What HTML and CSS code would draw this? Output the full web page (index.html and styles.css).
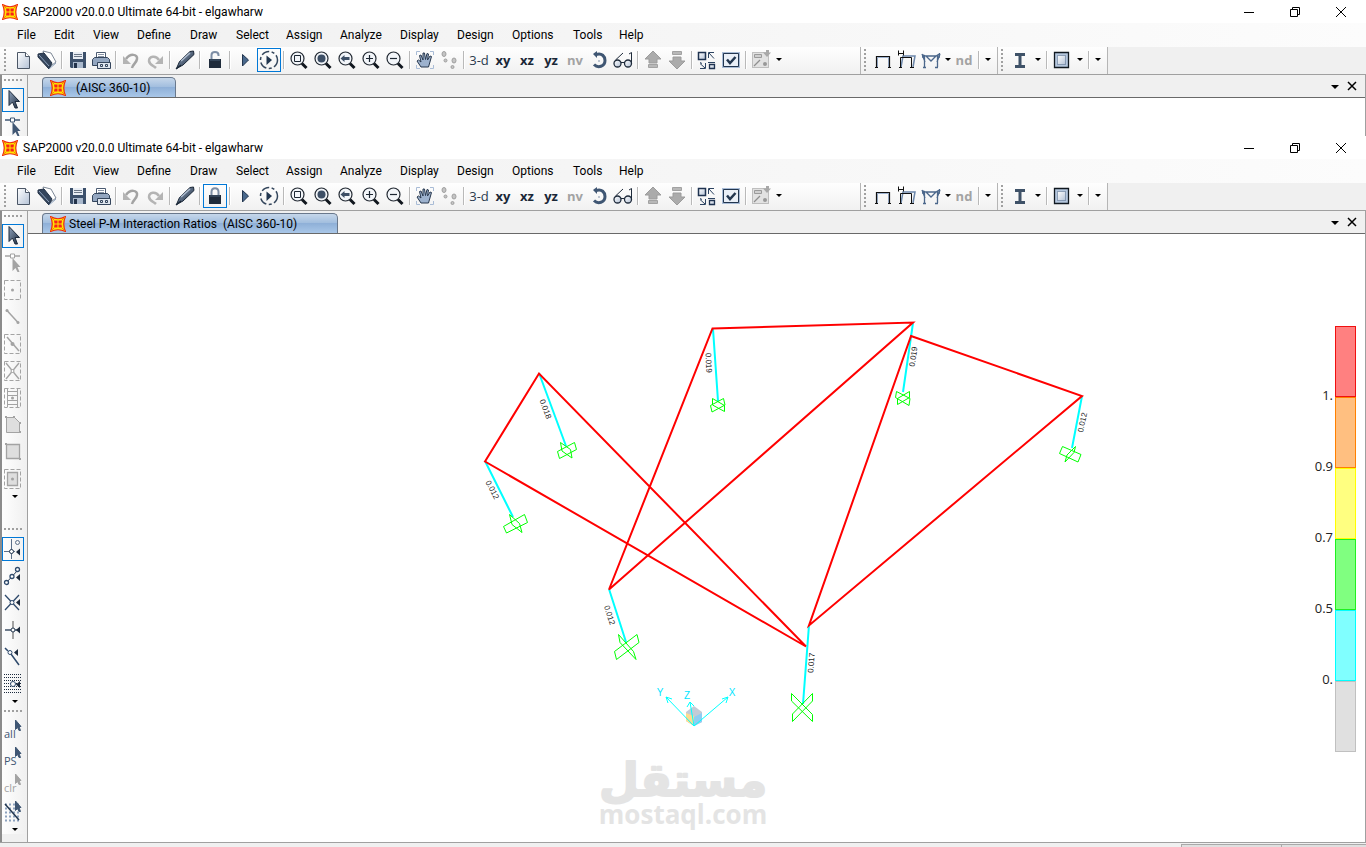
FILE: index.html
```html
<!DOCTYPE html>
<html lang="en">
<head>
  <meta charset="utf-8">
  <title>SAP2000 v20.0.0 Ultimate 64-bit - elgawharw</title>
  <meta name="viewport" content="width=device-width, initial-scale=1.0">
  <link rel="stylesheet" href="styles.css">
</head>
<body>

  <!-- icon set -->
  <svg class="sprite" aria-hidden="true">
    <defs>
      <linearGradient id="steel" x1="0" y1="0" x2="1" y2="1">
        <stop offset="0" stop-color="#8fa3bd"/><stop offset="1" stop-color="#1d2a3c"/>
      </linearGradient>
      <linearGradient id="pale" x1="0" y1="0" x2="1" y2="1">
        <stop offset="0" stop-color="#ffffff"/><stop offset="1" stop-color="#b4c2d6"/>
      </linearGradient>
    </defs>

    <symbol id="logo" viewBox="0 0 16 16">
      <path d="M.5.500Q8 5 15.500.500 12 8 15.500 15.500 8 12 .500 15.500 4 8 .500.500z" fill="#ffe600" stroke="#ee2a10" stroke-width="1.200"/>
      <path d="M4 4.500h3.500v3H4.500zM8.500 4.500H12l-.5 3h-3zM4.500 8.500h3v3H4zM8.500 8.500h3l.5 3H8.500z" fill="#f8201c"/>
      <path d="M1 1l3 3M15 1l-3 3M1 15l3-3M15 15l-3-3" stroke="#f58a00"/>
    </symbol>

    <symbol id="new" viewBox="0 0 24 24">
      <path d="M6.500 4.500h8l4 4v12h-12z" fill="url(#pale)" stroke="#4b5666"/>
      <path d="M14.500 4.500v4h4" fill="#fff" stroke="#4b5666"/>
    </symbol>
    <symbol id="open" viewBox="0 0 24 24">
      <path d="M8 3l8 2 5 9-8 6z" fill="#fff" stroke="#7d8896"/>
      <path d="M3 6l6-1 8 10-3 6L3 9z" fill="#34455c" stroke="#223146"/>
      <path d="M4 7l10 11" stroke="#8fa3bd"/>
      <path d="M14 21l7-6" stroke="#8fa3bd"/>
    </symbol>
    <symbol id="save" viewBox="0 0 24 24">
      <path d="M5 4h16v16H6l-1-1z" fill="#3c506b"/>
      <path d="M8 4h10v7H8z" fill="#e8edf4"/>
      <path d="M9 6.500h8M9 8.500h8" stroke="#6a7686"/>
      <path d="M8 14h10v6H8z" fill="#aab9cd"/>
      <path d="M9 15h3v5H9z" fill="#22324a"/>
    </symbol>
    <symbol id="print" viewBox="0 0 24 24">
      <path d="M7.500 11V4.500h9V11" fill="#fff" stroke="#4b5b72"/>
      <path d="M9 6.500h6M9 8.500h6" stroke="#8793a5"/>
      <path d="M3.500 11.500l2-2h13l2 2v6h-17z" fill="#93a6c0" stroke="#34455c"/>
      <path d="M8.500 14.500h13v6h-13z" fill="#dfe6ef" stroke="#34455c"/>
      <path d="M11.500 16.500h2v2h-2zM16.500 16.500h2v2h-2z" fill="none" stroke="#34455c"/>
    </symbol>
    <symbol id="undo" viewBox="0 0 24 24">
      <path d="M7 11c4-6 12-5 11 0-.5 4-4 5-5 9" fill="none" stroke="#a3a3a3" stroke-width="2.500"/>
      <path d="M4 8v8h8z" fill="#b4b4b4"/>
    </symbol>
    <symbol id="redo" viewBox="0 0 24 24">
      <path d="M16 12c-3-5-10-4-10 1 .5 4 5 5 7 7" fill="none" stroke="#b4b4b4" stroke-width="2.500"/>
      <path d="M20 8v8h-8z" fill="#b4b4b4"/>
    </symbol>
    <symbol id="pen" viewBox="0 0 24 24">
      <path d="M3.500 20.500l3-7L17 3.500l3.500-.5.500 3.500L10 17z" fill="url(#steel)" stroke="#1b2838"/>
      <path d="M8 13L17 5" stroke="#aebccf" stroke-width="1.500"/>
      <path d="M3 21l5-4" stroke="#1b2838" stroke-width="1.500"/>
    </symbol>
    <symbol id="unlocked" viewBox="0 0 24 24">
      <path d="M8.500 12V7c0-4 7-4 7 0v1" fill="none" stroke="#7d8ea5" stroke-width="2"/>
      <path d="M6 11h12v9H6z" fill="#1f2b3b"/>
      <path d="M7 12h10" stroke="#4b6078"/>
    </symbol>
    <symbol id="locked" viewBox="0 0 24 24">
      <path d="M8.500 12V8c0-5 7-5 7 0v4" fill="none" stroke="#7d8ea5" stroke-width="2"/>
      <path d="M6 11h12v9H6z" fill="#1f2b3b"/>
      <path d="M7 12h10" stroke="#4b6078"/>
    </symbol>
    <symbol id="run" viewBox="0 0 24 24">
      <path d="M9.500 6.500l6 5.500-6 6z" fill="#49688c" stroke="#22364f"/>
    </symbol>
    <symbol id="runall" viewBox="0 0 24 24">
      <circle cx="12" cy="12" r="8.500" fill="none" stroke="#34465c" stroke-width="1.500" stroke-dasharray="8 2.500 3 2.500"/>
      <path d="M9.500 7.500l5.500 4.500-5.500 5z" fill="#22364f"/>
    </symbol>
    <symbol id="lens" viewBox="0 0 24 24">
      <circle cx="10.500" cy="10.500" r="6.500" fill="#f2f5f9" stroke="#232a33" stroke-width="1.200"/>
      <path d="M15 15.500l4.500 4.500" stroke="#10161e" stroke-width="3"/>
    </symbol>
    <symbol id="zoombox" viewBox="0 0 24 24">
      <use href="#lens"/><path d="M7.500 7.500h6v6h-6z" fill="none" stroke="#1c2632"/>
    </symbol>
    <symbol id="zoomfull" viewBox="0 0 24 24">
      <use href="#lens"/><circle cx="10.500" cy="10.500" r="4" fill="#3d4f66"/>
    </symbol>
    <symbol id="zoomprev" viewBox="0 0 24 24">
      <use href="#lens"/><path d="M5.500 10.500l4-3.500v2h5v3h-5v2z" fill="#3d4f66"/>
    </symbol>
    <symbol id="zoomin" viewBox="0 0 24 24">
      <use href="#lens"/><path d="M7 10.500h7M10.500 7v7" stroke="#1c2632" stroke-width="1.200"/>
    </symbol>
    <symbol id="zoomout" viewBox="0 0 24 24">
      <use href="#lens"/><path d="M7 10.500h7" stroke="#1c2632" stroke-width="1.200"/>
    </symbol>
    <symbol id="hand" viewBox="0 0 24 24">
      <path d="M3.500 7V3.500H7M17 3.500h3.500V7M20.500 17v3.500H17M7 20.500H3.500V17" fill="none" stroke="#a9bcd6"/>
      <path d="M8 19l-4-6 1.500-1L8 14 6.500 7.500 8 7l2 5V5h1.500l1 6.500L14 5.500l1.500.5-1 6 2.500-4 1.500.5-3 10.500z" fill="#9db2ce" stroke="#27374d"/>
    </symbol>
    <symbol id="feet" viewBox="0 0 24 24">
      <g fill="#c4c4c4" stroke="#9f9f9f">
        <ellipse cx="7" cy="6" rx="2" ry="2.500"/><circle cx="8.500" cy="12.500" r="1.500"/>
        <ellipse cx="17" cy="12.500" rx="2" ry="2.500"/><circle cx="15.500" cy="19" r="1.500"/>
      </g>
    </symbol>
    <symbol id="rotate" viewBox="0 0 24 24">
      <path d="M9 6.500c6-2 9 2 9 6 0 6-7 8-11 4" fill="none" stroke="#3f5673" stroke-width="3"/>
      <path d="M10 3v7L6 6z" fill="#3f5673"/><path d="M11 13h2" stroke="#8394ab"/>
    </symbol>
    <symbol id="glasses" viewBox="0 0 24 24">
      <g fill="url(#pale)" stroke="#1f2b3b" stroke-width="1.300"><circle cx="6.500" cy="15.500" r="3.500"/><circle cx="17" cy="15.500" r="3.500"/></g>
      <path d="M10 14.500h3.500M4.500 12L12 5M20.500 15V4.500L18 6" fill="none" stroke="#1f2b3b"/>
    </symbol>
    <symbol id="up" viewBox="0 0 24 24">
      <path d="M12 3l8 8h-4v4H8v-4H4z" fill="#ababab" stroke="#9c9c9c"/><path d="M7.500 16.500h9v3h-9z" fill="#b8b8b8" stroke="#a2a2a2"/>
    </symbol>
    <symbol id="down" viewBox="0 0 24 24">
      <path d="M12 21l8-8h-4V9H8v4H4z" fill="#ababab" stroke="#9c9c9c"/><path d="M7.500 3.500h9v3h-9z" fill="#b8b8b8" stroke="#a2a2a2"/>
    </symbol>
    <symbol id="shrink" viewBox="0 0 24 24">
      <path d="M3.500 4.500h7v7h-7z" fill="url(#pale)" stroke="#1f3350" stroke-width="1.500"/>
      <path d="M14.500 16.500h5v4h-5z" fill="url(#pale)" stroke="#1f3350" stroke-width="1.300"/>
      <path d="M13.500 10V4.500H19M14 5l5 5.500M10.500 15v5.500H5M10 20l-5-4.500M13 14.500h7M5 14.500l2 1" fill="none" stroke="#2c4361"/>
    </symbol>
    <symbol id="check" viewBox="0 0 24 24">
      <path d="M4 5h16v14H4z" fill="#e9eff7" stroke="#a9bcd6" stroke-width="2"/>
      <path d="M4.500 5.500h15v13h-15z" fill="none" stroke="#22364f"/>
      <path d="M8 11.500l3 3.500 5.500-6" fill="none" stroke="#22364f" stroke-width="2.500"/>
    </symbol>
    <symbol id="pointobj" viewBox="0 0 24 24">
      <path d="M3.500 4.500h16v15h-16z" fill="#e2e2e2" stroke="#8f8f8f" stroke-dasharray="1 1"/>
      <path d="M5.500 6.500h7v3h-7z" fill="#d0d0d0" stroke="#9a9a9a"/><path d="M14 4.500h3V2h3v2.500h2L18 9z" fill="#a8a8a8"/><path d="M5 18l6-6" stroke="#8f8f8f" stroke-width="1.300"/><circle cx="16" cy="16" r="2" fill="#989898"/>
    </symbol>
    <symbol id="frame" viewBox="0 0 24 24">
      <path d="M6.500 20V9.500h11V20" fill="none" stroke="#9db2d0"/>
      <path d="M5.500 19.500v-11h13v11M4 19.500h3M17 19.500h3" fill="none" stroke="#111" stroke-width="1.200"/>
    </symbol>
    <symbol id="deform" viewBox="0 0 24 24">
      <path d="M6 19L8 8h12l-2 11" fill="none" stroke="#6c87aa" stroke-width="1.500"/>
      <path d="M5.500 19.500v-10h11v10M4 19.500h3M15 19.500h4M3.500 2.500v5M8.500 2.500v5M3.500 5.500h5" fill="none" stroke="#111"/>
    </symbol>
    <symbol id="forces" viewBox="0 0 24 24">
      <path d="M5.500 19V8L3 6.500 7 8h10l4-2.500-2.500 2v11.500M3 9h2.500M18 9h3M7 8l5 5 5-5M6 14L3 6M18 14l3-8M4 19.500h3M16 19.500h3" fill="none" stroke="#4b678b" stroke-width="1.300"/>
    </symbol>
    <symbol id="ibeam" viewBox="0 0 24 24">
      <path d="M7 5h10v3h-3.500v9H17v3H7v-3h3.500V8H7z" fill="#3f5268"/>
    </symbol>
    <symbol id="section" viewBox="0 0 24 24">
      <path d="M4.500 4.500h14v15h-14z" fill="#b5c7de" stroke="#101820" stroke-width="1.300"/>
      <path d="M7.500 7.500h8v9h-8z" fill="url(#pale)" stroke="#4d6484" stroke-dasharray="1 1"/>
    </symbol>

    <!-- side bar icons -->
    <symbol id="pick" viewBox="0 0 22 24">
      <path d="M7 2.500v15l3.500-3.500 2.500 6h2.500L13 13.500h4.500z" fill="url(#steel)" stroke="#1d2a3c"/>
    </symbol>
    <symbol id="reshape" viewBox="0 0 22 24">
      <path d="M3 5h15" stroke="currentColor" stroke-width="1.500"/><path d="M8.500 3h4v4h-4z" fill="#fff" stroke="currentColor"/>
      <path d="M10.500 7v13l3-3 2 4h2l-2-5h3z" fill="currentColor"/>
    </symbol>
    <symbol id="box" viewBox="0 0 22 24">
      <path d="M2.500 2.500h16v19h-16z" fill="none" stroke="currentColor" stroke-dasharray="4 2"/>
    </symbol>
    <symbol id="joint" viewBox="0 0 22 24">
      <use href="#box"/><circle cx="10.500" cy="12" r="1.500" fill="currentColor"/>
    </symbol>
    <symbol id="member" viewBox="0 0 22 24">
      <path d="M5 5.500l11 12" stroke="currentColor" stroke-width="1.500"/><circle cx="5" cy="5.500" r="1.500" fill="currentColor"/><circle cx="16" cy="17.500" r="1.500" fill="currentColor"/>
    </symbol>
    <symbol id="quickmember" viewBox="0 0 22 24">
      <use href="#box"/><path d="M5 5l12 14" stroke="currentColor" stroke-width="1.500"/><circle cx="10.500" cy="12" r="2" fill="currentColor"/>
    </symbol>
    <symbol id="brace" viewBox="0 0 22 24">
      <use href="#box"/><path d="M4 4l13 16M17 4L4 20" stroke="currentColor" stroke-width="1.300"/><circle cx="10.500" cy="12" r="1.500" fill="#fff" stroke="currentColor"/>
    </symbol>
    <symbol id="beams" viewBox="0 0 22 24">
      <use href="#box"/><path d="M5.500 3v18M15.500 3v18M5 5.500h11M5 9.500h11M5 14.500h11M5 18.500h11" stroke="currentColor"/><circle cx="10.500" cy="12" r="1.500" fill="currentColor"/>
    </symbol>
    <symbol id="poly" viewBox="0 0 22 24">
      <path d="M4.500 4.500h8l5 5v10h-13z" fill="#dedede" stroke="currentColor"/><path d="M3 3h2v2H3zM11 3h2v2h-2zM17 9h2v2h-2zM17 18h2v2h-2z" fill="currentColor"/>
    </symbol>
    <symbol id="rect" viewBox="0 0 22 24">
      <path d="M4.500 4.500h13v14h-13z" fill="#dedede" stroke="currentColor" stroke-width="1.300"/><path d="M3 3h2v2H3zM17 18h2v2h-2z" fill="currentColor"/>
    </symbol>
    <symbol id="area" viewBox="0 0 22 24">
      <use href="#box"/><path d="M5.500 5.500h10v13h-10z" fill="#dedede" stroke="currentColor" stroke-width="1.300"/><circle cx="10.500" cy="12" r="1.500" fill="currentColor"/>
    </symbol>
    <symbol id="snapjoint" viewBox="0 0 22 24">
      <path d="M2 14.500h11M9.500 2v20" stroke="#5d7089"/><circle cx="9.500" cy="14.500" r="2" fill="#fff" stroke="#22364f"/><circle cx="15.500" cy="5.500" r="2" fill="none" stroke="#5d7089"/><path d="M18 11.500v7l-4-3.500z" fill="#1c2a3d"/>
    </symbol>
    <symbol id="snapmid" viewBox="0 0 22 24">
      <path d="M4 19L16 6" stroke="#22364f"/><g fill="#fff" stroke="#2f4a6c" stroke-width="1.300"><circle cx="4.500" cy="18.500" r="2"/><circle cx="10" cy="12.500" r="2"/><circle cx="15.500" cy="5.500" r="2"/></g><path d="M18 10v7l-4-3.500z" fill="#1c2a3d"/>
    </symbol>
    <symbol id="snapcross" viewBox="0 0 22 24">
      <path d="M3 4l14 15M17 4L3 19" stroke="#2f4a6c" stroke-width="1.300"/><circle cx="10" cy="11.500" r="2" fill="#fff" stroke="#2f4a6c"/><path d="M18 8v7l-4-3.500z" fill="#1c2a3d"/>
    </symbol>
    <symbol id="snapperp" viewBox="0 0 22 24">
      <path d="M11 3v18" stroke="#a3a3a3" stroke-width="2"/><path d="M3 12h12" stroke="#22364f" stroke-width="1.300"/><circle cx="11" cy="12" r="2" fill="#fff" stroke="#22364f"/><path d="M18 8.500v7L14 12z" fill="#1c2a3d"/>
    </symbol>
    <symbol id="snapline" viewBox="0 0 22 24">
      <path d="M3 3l3 3M9 9l8 11" stroke="#2f4a6c" stroke-width="1.500"/><circle cx="8" cy="7.500" r="2" fill="#fff" stroke="#2f4a6c"/><path d="M16 4v7l-4-3.500z" fill="#1c2a3d"/>
    </symbol>
    <symbol id="snapgrid" viewBox="0 0 22 24">
      <path d="M2 2.500h17M2 5.500h17M2 8.500h17M2 11.500h17M2 14.500h17M2 17.500h17M2 20.500h17" stroke="#1c2a3d" stroke-dasharray="1 1"/><circle cx="11" cy="12" r="2.500" fill="#fff" stroke="#2f4a6c"/><path d="M18 9v7l-4-3.500z" fill="#1c2a3d"/>
    </symbol>
    <symbol id="miniarrow" viewBox="0 0 22 24">
      <path d="M13.500 1v9.500l2-2 1.500 3h1.500l-1.500-4h2z" fill="currentColor" stroke="currentColor"/>
    </symbol>
    <symbol id="intersect" viewBox="0 0 22 24">
      <path d="M3 4.500h14M3 8.500h14M3 12.500h14M3 16.500h14M3 20.500h14" stroke="#8da2be" stroke-width="2" stroke-dasharray="2 2"/><path d="M3 4l14 16" stroke="#22364f" stroke-width="1.500"/><use href="#miniarrow"/>
    </symbol>
  </svg>

  <!-- title bar, menu and tool bars, the same for both windows -->
  <template id="window-head">
    <header class="titlebar">
      <svg class="logo"><use href="#logo"/></svg>
      <h1>SAP2000 v20.0.0 Ultimate 64-bit - elgawharw</h1>
      <div class="winbuttons">
        <button aria-label="Minimize"><svg viewBox="0 0 12 12"><path d="M1 6.500h10"/></svg></button>
        <button aria-label="Restore"><svg viewBox="0 0 12 12"><path d="M1.500 3.500h7v7h-7zM3.500 3.500v-2h7v7h-2"/></svg></button>
        <button aria-label="Close"><svg viewBox="0 0 12 12"><path d="M1 1l10 10M11 1L1 11"/></svg></button>
      </div>
    </header>
    <nav class="menubar">
      <button>File</button><button>Edit</button><button>View</button><button>Define</button><button>Draw</button><button>Select</button><button>Assign</button><button>Analyze</button><button>Display</button><button>Design</button><button>Options</button><button>Tools</button><button>Help</button>
    </nav>
    <div class="toolbars">
      <div class="toolbar main" data-icons="new open | save print | undo redo | pen | lock | run runall | zoombox zoomfull zoomprev zoomin zoomout | hand feet | 3-d xy xz yz nv rotate glasses | up down | shrink check | pointobj v"></div>
      <div class="toolbar" data-icons="frame deform forces v nd | v"></div>
      <div class="toolbar" data-icons="ibeam v | section v | v"></div>
    </div>
  </template>

  <section class="window input" data-lock="unlocked" data-active="runall">
    <div class="workspace">
      <aside class="sidebar">
        <div class="strip draw" data-icons="pick reshape"></div>
      </aside>
      <main class="view">
        <div class="tabs">
          <button class="tab model"><svg class="logo"><use href="#logo"/></svg>(AISC 360-10)</button>
          <button class="tabmenu v" aria-label="Windows"></button>
          <button class="tabclose" aria-label="Close tab"><svg viewBox="0 0 10 10"><path d="M1 1l8 8M9 1L1 9"/></svg></button>
        </div>
      </main>
    </div>
  </section>

  <section class="window results" data-lock="locked" data-active="locked">
    <div class="workspace">
      <aside class="sidebar">
        <div class="strip draw" data-icons="pick reshape joint member quickmember brace beams poly rect area v"></div>
        <div class="strip" data-icons="snapjoint snapmid snapcross snapperp snapline snapgrid v"></div>
        <div class="strip" data-icons="all PS clr intersect v"></div>
      </aside>
      <main class="view">
        <div class="tabs">
          <button class="tab"><svg class="logo"><use href="#logo"/></svg>Steel P-M Interaction Ratios&nbsp; (AISC 360-10)</button>
          <button class="tabmenu v" aria-label="Windows"></button>
          <button class="tabclose" aria-label="Close tab"><svg viewBox="0 0 10 10"><path d="M1 1l8 8M9 1L1 9"/></svg></button>
        </div>
        <div class="canvas">
          <svg class="model3d" role="img" aria-label="Steel frame">
            <g transform="translate(-28 -234)">
              <g class="columns">
                <path d="M539 373L566 446M485 461L513 517M713 329L718 401M913 323L903 392M1082 396L1072 448M609 589L626 642M809 625L803 704"/>
              </g>
              <g class="beams">
                <path d="M485 461.500L539 373.500 806 646.500zM712.500 328.500L913 322.500 609 589.500zM911 336L1082 396 809 625.500z"/>
              </g>
              <g class="supports">
                <path d="M557.500 451.500l17-9 2 7-17 9zM560.500 442.500l10 7 1.500 8.500-10-7z"/>
                <path d="M503.500 526.500l21-12 3 8-21 10.500zM509.500 514.500l10 9 2.500 9-10-8z"/>
                <path d="M710.500 405.500l13-7 1.500 6.500-13 7zM712.500 398.500l12 7v6l-12-6.500z"/>
                <path d="M896.500 391.500l13.500 7-1 7-13.500-8zM909.500 391.500v6l-12 7v-6z"/>
                <path d="M1062.500 446.500l18.500 8-3 7.500-18.500-8.500zM1075.500 446.500l-1.500 6-9 9.500 2-7z"/>
                <path d="M614.500 651.500l22.500-17 2 8-22.500 17zM618.500 634.500l15 17 2.500 8-16-17z"/>
                <path d="M791.500 693.500l21 21v7l-21-20.500zM812.500 693.500v7.500l-20 20.500v-7.500z"/>
              </g>
              <g class="ratios">
                <text transform="translate(543 410) rotate(70)">0.018</text>
                <text transform="translate(490 491) rotate(62)">0.012</text>
                <text transform="translate(706 363) rotate(87)">0.019</text>
                <text transform="translate(916 357) rotate(-82)">0.019</text>
                <text transform="translate(1085 423) rotate(-78)">0.012</text>
                <text transform="translate(607 616) rotate(72)">0.012</text>
                <text transform="translate(814 663) rotate(-86)">0.017</text>
              </g>
              <g class="cube">
                <path d="M686 712l8-6 8 6v10l-8 4-8-5z" fill="#c3cbd6"/>
                <path d="M686 713l8 3v10l-8-5z" fill="#fbdc94"/>
                <path d="M694 717l8-4v9l-8 4z" fill="#8fcdf2"/>
              </g>
              <path class="axes" d="M694 726l34-29M722 699l6-2-2 6M694 726l-28-29M672 699l-6-2 2 6M694 726l-4-24M687 707l3-5 4 4"/>
              <g class="axisnames">
                <text x="732" y="696">X</text><text x="660" y="696">Y</text><text x="687" y="699">Z</text>
              </g>
              <g class="watermark">
                <text class="arabic" x="683" y="796">مستقل</text>
                <text class="latin" x="683" y="824">mostaql.com</text>
              </g>
            </g>
          </svg>
          <ul class="legend">
            <li class="red"><span>1.</span></li>
            <li class="orange"><span>0.9</span></li>
            <li class="yellow"><span>0.7</span></li>
            <li class="green"><span>0.5</span></li>
            <li class="cyan"><span>0.</span></li>
            <li class="grey"></li>
          </ul>
        </div>
      </main>
    </div>
    <footer class="statusbar"><span></span><span></span></footer>
  </section>

  <script src="script.js"></script>
</body>
</html>
```

FILE: styles.css
```css
* {
  box-sizing: border-box;
}

body {
  display: flex;
  flex-direction: column;
  min-height: 100vh;
  margin: 0;
  background: #fff;
  color: #000;
  font-family: Roboto, "Noto Sans", sans-serif;
  font-size: 12px;
}

button {
  margin: 0;
  padding: 0;
  border: 0;
  background: none;
  color: inherit;
  font: inherit;
}

.sprite {
  position: absolute;
  width: 0;
  height: 0;
}

.window {
  display: flex;
  flex-direction: column;
}

.window.input {
  height: 136px;
  overflow: hidden;
}

.window.results {
  flex: 1;
}

/* title bar */
.titlebar {
  display: flex;
  align-items: center;
  flex: none;
  height: 23px;
  padding-left: 2px;
}

.logo {
  width: 16px;
  height: 16px;
  flex: none;
}

.titlebar h1 {
  flex: 1;
  margin: 0 0 0 5px;
  font-size: 12px;
  font-weight: normal;
  line-height: 16px;
}

.winbuttons {
  display: flex;
  padding-right: 2px;
}

.winbuttons button {
  display: flex;
  align-items: center;
  justify-content: center;
  width: 46px;
  height: 20px;
}

.winbuttons svg {
  width: 12px;
  height: 12px;
  fill: none;
  stroke: #000;
}

/* menu */
.menubar {
  display: grid;
  flex: none;
  grid-template-columns: 37px 39px 44px 53px 46px 50px 54px 60px 57px 55px 61px 46px 46px;
  height: 24px;
  padding-left: 7px;
  background: linear-gradient(to right, #f0f0f0, #fcfcfc);
}

.menubar button {
  padding-left: 10px;
  text-align: left;
  line-height: 24px;
  white-space: nowrap;
}

/* tool bars */
.toolbars {
  display: flex;
  flex: none;
  height: 27px;
  background: #f0f0f0;
}

.toolbar {
  display: flex;
  align-items: center;
  padding: 0 3px 2px 0;
  border-right: 1px solid #b5b5b5;
  background: linear-gradient(#fefefe, #f1f1f1);
}

.toolbar.main {
  width: 861px;
  padding-left: 1px;
}

.toolbar::before {
  content: "";
  align-self: stretch;
  width: 10px;
  background: repeating-linear-gradient(#a0a0a0 0 2px, transparent 2px 4px) 3px 2px / 2px 22px no-repeat;
}

.toolbar button {
  width: 24px;
  height: 24px;
  flex: none;
  color: #2a3a4e;
  font-family: "Open Sans", sans-serif;
  font-size: 13px;
  line-height: 22px;
  text-align: center;
  white-space: nowrap;
}

.toolbar svg {
  display: block;
  width: 24px;
  height: 24px;
}

.toolbar .bold {
  color: #1a2737;
  font-weight: bold;
}

.toolbar .off {
  color: #a3a3a3;
}

.toolbar .active,
.strip .active {
  outline: 1px solid #0078d7;
  outline-offset: -1px;
}

.sep {
  width: 2px;
  height: 18px;
  margin: 0 2px;
  border-left: 1px solid #b9b9b9;
  border-right: 1px solid #fff;
  flex: none;
}

.toolbar .v {
  width: 12px;
}

/* arrow that belongs to the icon on its left */
.toolbar .v:has(+ .off) {
  width: 9px;
}

.v {
  display: flex;
  align-items: center;
  justify-content: center;
}

.v::before {
  content: "";
  border: 3px solid transparent;
  border-top-color: #000;
  border-bottom: 0;
}

/* side bar */
.workspace {
  display: flex;
  flex: 1;
  border-top: 1px solid #a0a0a0;
}

.sidebar {
  width: 28px;
  flex: none;
  border-left: 2px solid #8c8c8c;
  border-right: 1px solid #a0a0a0;
  background: #f0f0f0;
}

.strip {
  width: 24px;
  background: linear-gradient(to right, #fefefe, #f0f0f0);
}

.strip.draw {
  min-height: 313px;
}

.strip::before {
  content: "";
  display: block;
  height: 10px;
  background: repeating-linear-gradient(to right, #a0a0a0 0 2px, transparent 2px 4px) 2px 4px / 20px 2px no-repeat;
}

.strip button {
  display: block;
  width: 22px;
  height: 24px;
  margin-top: 3px;
  color: #3f5673;
  font-family: "Open Sans", sans-serif;
  font-size: 11px;
  text-align: left;
}

.strip svg {
  display: block;
  width: 22px;
  height: 24px;
}

.strip .word {
  position: relative;
  padding: 5px 0 0 2px;
  line-height: 14px;
}

.strip .word svg {
  position: absolute;
  top: 0;
  left: 0;
}

.strip .v {
  display: flex;
  height: 10px;
  margin: 0 0 0 2px;
}

.results .draw button:not(.active),
.strip .off {
  color: #a3a3a3;
}

/* document area */
.view {
  display: flex;
  flex: 1;
  flex-direction: column;
  border-right: 1px solid #a0a0a0;
}

.tabs {
  display: flex;
  align-items: flex-end;
  height: 23px;
  padding-left: 14px;
  border-bottom: 1px solid #696969;
  background: #f0f0f0;
}

.tab {
  display: flex;
  align-items: center;
  gap: 3px;
  height: 20px;
  min-width: 134px;
  margin-right: auto;
  padding: 0 40px 0 7px;
  border: 1px solid #69788c;
  border-bottom: 0;
  border-radius: 4px 5px 0 0;
  background: linear-gradient(#c6d7ea, #a3bfdf 45%, #8fb0d8 50%, #a9c7e8);
  line-height: 18px;
  white-space: nowrap;
}

.tab.model {
  gap: 10px;
  padding-right: 20px;
}

.tabs .tabmenu,
.tabs .tabclose {
  width: 17px;
  height: 20px;
}

.tabs .tabmenu::before {
  border-width: 4px 4px 0;
}

.tabclose {
  margin-right: 5px;
}

.tabclose svg {
  width: 10px;
  height: 10px;
  fill: none;
  stroke: #000;
  stroke-width: 1.5;
}

.canvas {
  display: flex;
  flex: 1;
  background: #fff;
}

.model3d {
  flex: 1;
  min-width: 0;
  height: auto;
}

.columns {
  stroke: #00ffff;
  stroke-width: 2;
}

.beams {
  fill: none;
  stroke: #ff0000;
  stroke-width: 2;
}

.supports {
  fill: none;
  stroke: #00ff00;
}

.ratios {
  fill: #222;
  font-family: "Liberation Sans", Arial, sans-serif;
  font-size: 8px;
  text-anchor: middle;
}

.axes {
  fill: none;
  stroke: #00ffff;
}

.axisnames {
  fill: #00e5ff;
  font-family: "Liberation Sans", Arial, sans-serif;
  font-size: 10px;
  text-anchor: middle;
}

.watermark {
  fill: #e4e4e4;
  font-weight: bold;
  text-anchor: middle;
}

.arabic {
  stroke: #e4e4e4;
  stroke-width: 2;
  stroke-linejoin: round;
  font-family: "DejaVu Sans", sans-serif;
  font-size: 46px;
}

.latin {
  font-family: "Open Sans", sans-serif;
  font-size: 26px;
}

/* ratio legend */
.legend {
  margin: 0 9px 0 0;
  padding: 92px 0 0;
  list-style: none;
}

.legend li {
  position: relative;
  width: 21px;
  height: 71px;
  border-width: 1px;
  border-style: solid;
}

.legend span {
  position: absolute;
  right: 22px;
  bottom: -8px;
  color: #222;
  font-family: "Open Sans", sans-serif;
  font-size: 13px;
  line-height: 18px;
}

.red { background: #ff8080; border-color: #f01010; }
.orange { background: #ffbf80; border-color: #ff8000; }
.yellow { background: #ffff80; border-color: #ffff00; }
.green { background: #80ff80; border-color: #20f020; }
.cyan { background: #80ffff; border-color: #00ffff; }
.grey { background: #e0e0e0; border-color: #c0c0c0; }

.statusbar {
  display: flex;
  justify-content: flex-end;
  height: 5px;
  border-top: 1px solid #a0a0a0;
  background: #f0f0f0;
}

.statusbar span {
  width: 100px;
  margin-top: 1px;
  border: solid #a9a9a9;
  border-width: 1px 0 0 1px;
  background: #e0e0e0;
}

.statusbar span:last-child {
  width: 85px;
}
```

FILE: script.js
```js
const words = ['3-d', 'xy', 'xz', 'yz', 'nv', 'nd', 'all', 'PS', 'clr'];
const bold = ['xy', 'xz', 'yz', 'nv', 'nd'];
const disabled = ['nv', 'nd', 'clr'];

function icon(name) {
  return '<svg aria-hidden="true"><use href="#' + name + '"/></svg>';
}

function makeButton(name, bar, win) {
  if (name === '|') {
    const sep = document.createElement('span');
    sep.className = 'sep';
    return sep;
  }

  const button = document.createElement('button');
  if (name === 'lock') name = win.dataset.lock;

  if (name === 'v') {
    button.className = 'v';
    button.setAttribute('aria-label', 'More');
  } else if (words.includes(name)) {
    button.textContent = name;
    if (bar.classList.contains('strip')) {
      button.classList.add('word');
      button.insertAdjacentHTML('beforeend', icon('miniarrow'));
    }
    if (bold.includes(name)) button.classList.add('bold');
    if (disabled.includes(name)) button.classList.add('off');
  } else {
    button.innerHTML = icon(name);
    button.setAttribute('aria-label', name);
  }

  if (name === win.dataset.active || name === 'pick' || name === 'snapjoint') {
    button.classList.add('active');
  }
  return button;
}

document.querySelectorAll('.window').forEach(function (win) {
  win.prepend(document.getElementById('window-head').content.cloneNode(true));
  win.querySelectorAll('[data-icons]').forEach(function (bar) {
    bar.dataset.icons.split(' ').forEach(function (name) {
      bar.append(makeButton(name, bar, win));
    });
  });
});
```
